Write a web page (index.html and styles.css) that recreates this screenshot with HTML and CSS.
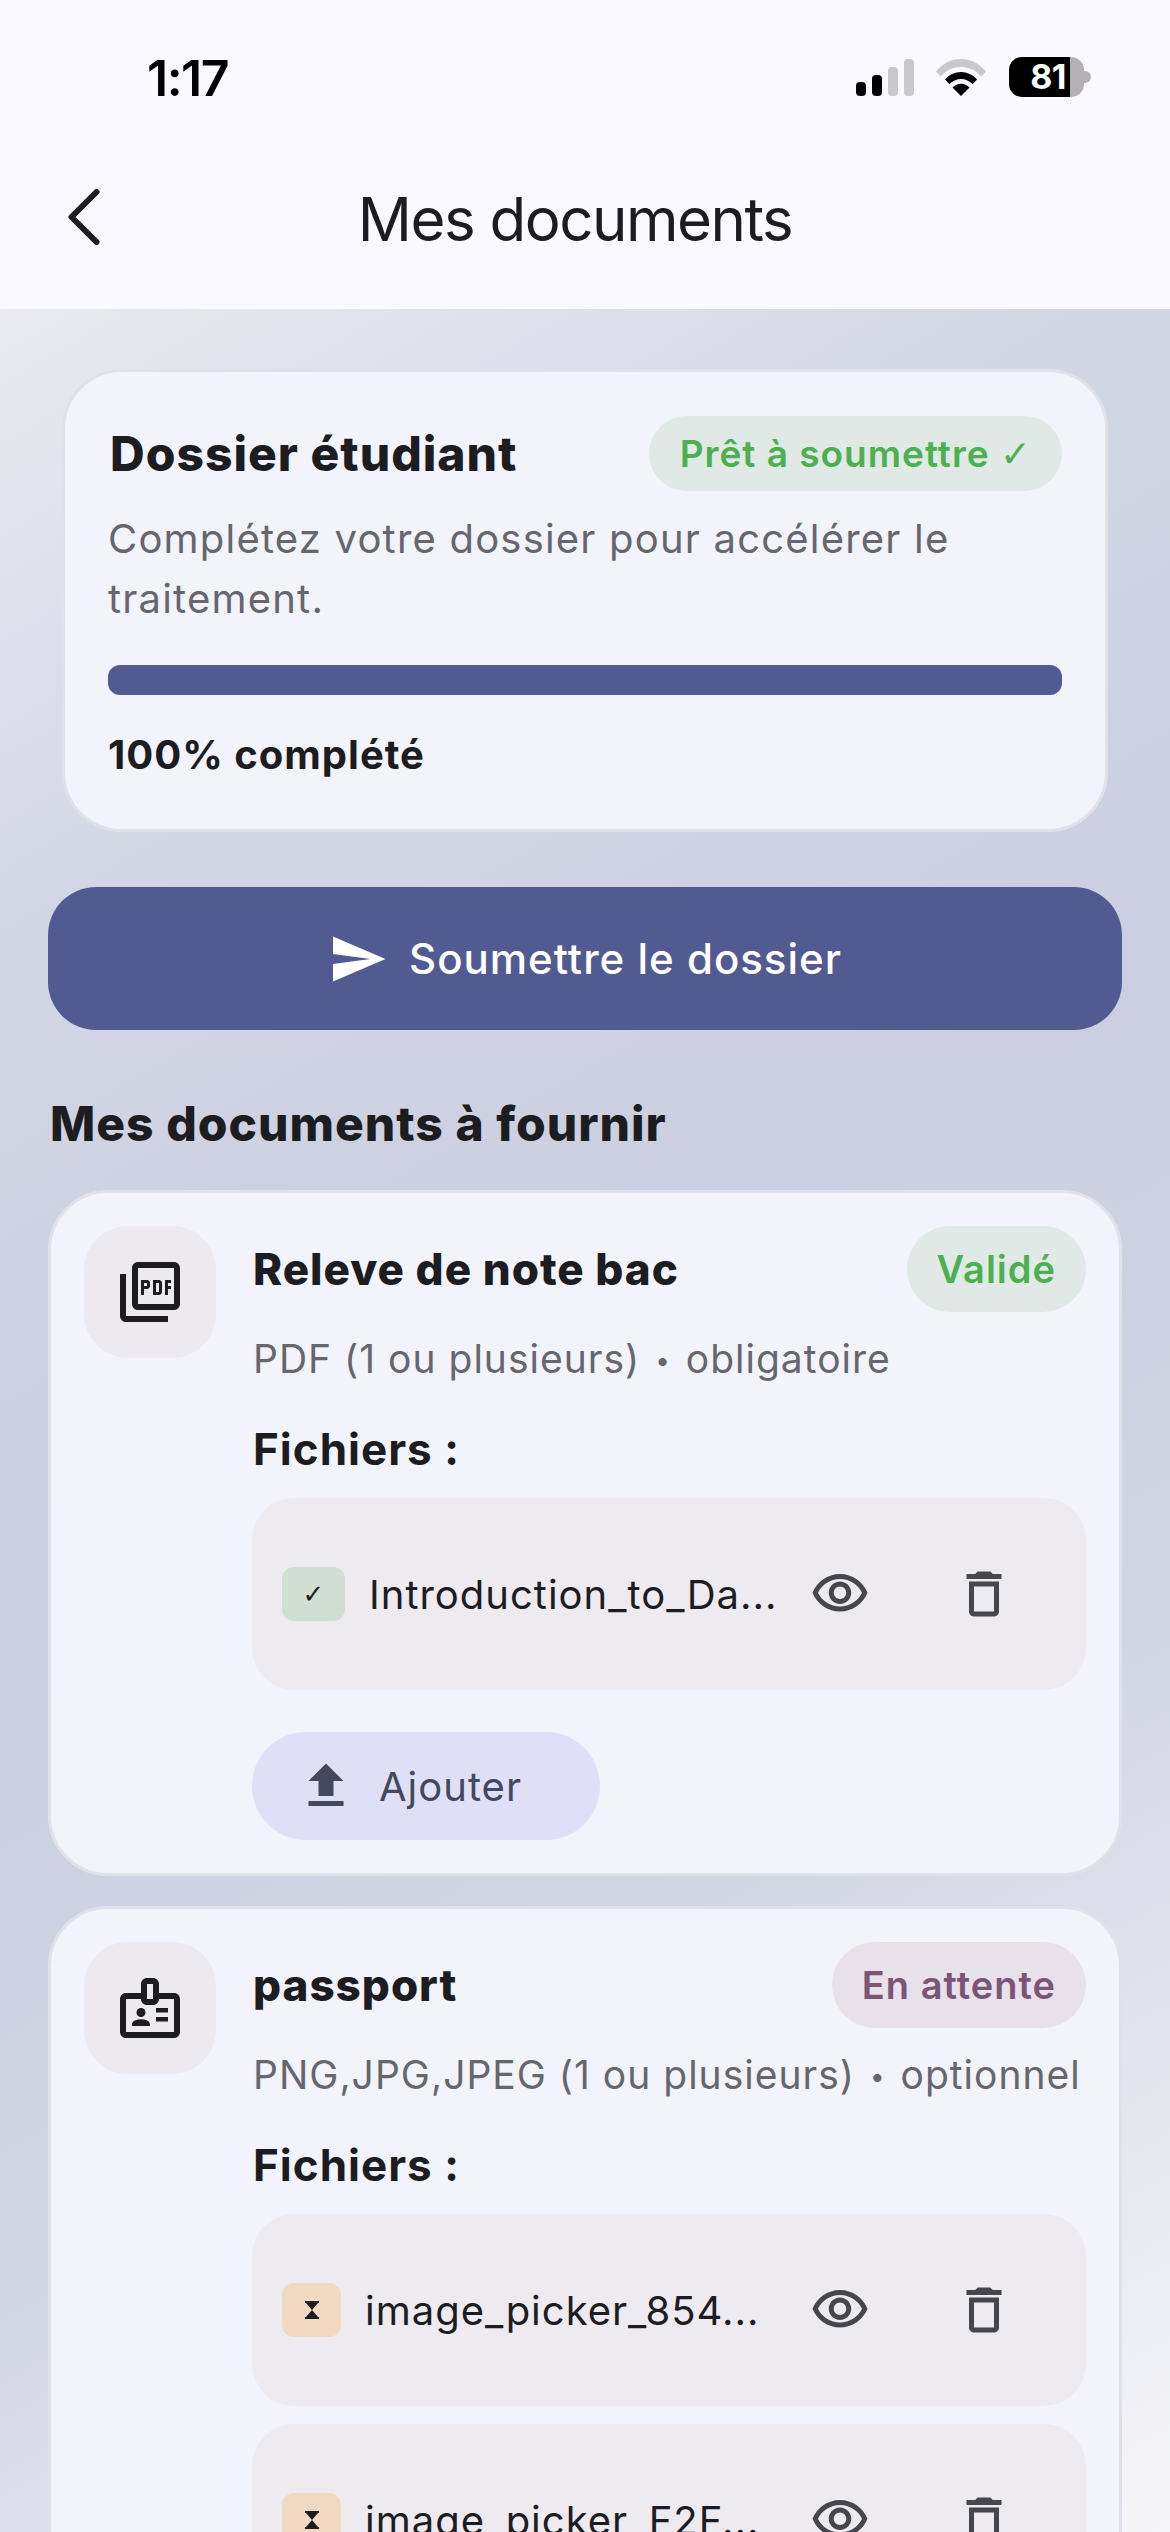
FILE: index.html
```html
<!DOCTYPE html>
<html lang="fr">
<head>
<meta charset="utf-8">
<title>Mes documents</title>
<link rel="stylesheet" href="styles.css">
</head>
<body>
<div class="app">
  <header class="top">
    <div class="status">
      <span class="clock">1:17</span>
      <div class="status-icons">
        <div class="signal"><i class="b1"></i><i class="b2"></i><i class="b3"></i><i class="b4"></i></div>
        <svg class="wifi" viewBox="0 0 50 37"><path fill="#c9c8cd" d="M0 12.5C6.500 4.500 15.500 0 25 0s18.500 4.500 25 12.500l-4.800 5C40 11.500 33 8 25 8S10 11.500 4.800 17.500z"/><path d="M9 20.500C13 15.800 19 13 25 13s12 2.800 16 7.500l-4.500 4.700C33.500 22 29.500 20 25 20s-8.500 2-11.500 5.200z"/><path d="M16.500 28.500C18.800 26 21.800 24.700 25 24.700s6.200 1.300 8.500 3.800L25 37z"/></svg>
        <div class="battery"><div class="batt-body"><span>81</span></div><div class="batt-rest"></div><div class="batt-nub"></div></div>
      </div>
    </div>
    <div class="nav">
      <svg class="back" viewBox="0 0 32 56"><path d="M28.500 3 3.500 28l25 25" fill="none" stroke="#1c1c21" stroke-width="6" stroke-linecap="round" stroke-linejoin="round"/></svg>
      <h1>Mes documents</h1>
    </div>
  </header>
  <main class="content">
    <section class="summary">
      <div class="sum-head">
        <h2>Dossier étudiant</h2>
        <span class="ready">Prêt à soumettre <span class="tick">✓</span></span>
      </div>
      <p class="sum-desc">Complétez votre dossier pour accélérer le traitement.</p>
      <div class="bar"></div>
      <p class="sum-pct">100% complété</p>
    </section>
    <button class="submit">
      <svg class="i60" viewBox="0 0 24 24"><path fill="#fff" d="M2.010 21 23 12 2.010 3 2 10l15 2-15 2z"/></svg>
      <span>Soumettre le dossier</span>
    </button>
    <h3 class="section">Mes documents à fournir</h3>

    <article class="doc">
      <div class="tile"><svg class="i72" viewBox="0 0 24 24"><path fill="#1c1c21" d="M20 2H8c-1.100 0-2 .9-2 2v12c0 1.100.9 2 2 2h12c1.100 0 2-.9 2-2V4c0-1.100-.9-2-2-2zm0 14H8V4h12v12zM4 6H2v14c0 1.100.9 2 2 2h14v-2H4V6zm12 6V9c0-.55-.45-1-1-1h-2v5h2c.55 0 1-.45 1-1zm-2-3h1v3h-1V9zm4 2h1v-1h-1V9h1V8h-2v5h1v-2zm-8 0h1c.55 0 1-.45 1-1V9c0-.55-.45-1-1-1H9v5h1v-2zm0-2h1v1h-1V9z"/></svg></div>
      <div class="doc-main">
        <div class="doc-head"><h4>Releve de note bac</h4><span class="pill ok">Validé</span></div>
        <p class="doc-sub">PDF (1 ou plusieurs) <span class="dot">•</span> obligatoire</p>
        <p class="files-label">Fichiers :</p>
        <div class="file">
          <span class="chip chip-ok">✓</span>
          <span class="fname">Introduction_to_Da...</span>
          <div class="actions">
            <svg class="i60" viewBox="0 0 24 24"><path fill="#46464f" d="M12 6c3.790 0 7.170 2.130 8.820 5.500C19.170 14.870 15.790 17 12 17s-7.170-2.130-8.820-5.500C4.830 8.130 8.210 6 12 6m0-2C7 4 2.730 7.110 1 11.500 2.730 15.890 7 19 12 19s9.270-3.110 11-7.500C21.270 7.110 17 4 12 4zm0 5c1.380 0 2.500 1.120 2.500 2.500S13.380 14 12 14s-2.500-1.120-2.500-2.500S10.620 9 12 9m0-2c-2.480 0-4.500 2.020-4.500 4.500S9.520 16 12 16s4.500-2.020 4.500-4.500S14.480 7 12 7z"/></svg>
            <svg class="i60" viewBox="0 0 24 24"><path fill="#46464f" d="M16 9v10H8V9h8m-1.500-6h-5l-1 1H5v2h14V4h-3.500l-1-1zM18 7H6v12c0 1.100.9 2 2 2h8c1.100 0 2-.9 2-2V7z"/></svg>
          </div>
        </div>
        <button class="add">
          <svg class="i60" viewBox="0 0 24 24"><path fill="#45475c" d="M9 16h6v-6h4l-7-7-7 7h4zm-4 2h14v2H5z"/></svg>
          <span>Ajouter</span>
        </button>
      </div>
    </article>

    <article class="doc">
      <div class="tile"><svg class="i72" viewBox="0 0 24 24" fill="#1c1c21"><path d="M20 7h-5V4c0-1.100-.9-2-2-2h-2C9.900 2 9 2.900 9 4v3H4C2.900 7 2 7.900 2 9v11c0 1.100.9 2 2 2h16c1.100 0 2-.9 2-2V9c0-1.100-.9-2-2-2zM11 4h2v5h-2V4zm9 16H4V9h5c0 1.100.9 2 2 2h2c1.100 0 2-.9 2-2h5v11z"/><circle cx="9" cy="13.500" r="1.500"/><path d="M11.080 16.180C10.440 15.900 9.740 15.750 9 15.750s-1.440.15-2.080.43C6.360 16.420 6 16.960 6 17.570V18h6v-.43c0-.61-.36-1.150-.92-1.390z"/><path d="M14 12h4v1.500h-4zM14 15h4v1.500h-4z"/></svg></div>
      <div class="doc-main">
        <div class="doc-head"><h4>passport</h4><span class="pill wait">En attente</span></div>
        <p class="doc-sub">PNG,JPG,JPEG (1 ou plusieurs) <span class="dot">•</span> optionnel</p>
        <p class="files-label">Fichiers :</p>
        <div class="file">
          <span class="chip chip-wait"><svg class="hg" viewBox="0 0 18 18"><path fill="#1c1c21" d="M2 0h14v2h-1L9 9l6 7h1v2H2v-2h1l6-7-6-7H2z"/></svg></span>
          <span class="fname">image_picker_854...</span>
          <div class="actions">
            <svg class="i60" viewBox="0 0 24 24"><path fill="#46464f" d="M12 6c3.790 0 7.170 2.130 8.820 5.500C19.170 14.870 15.790 17 12 17s-7.170-2.130-8.820-5.500C4.830 8.130 8.210 6 12 6m0-2C7 4 2.730 7.110 1 11.500 2.730 15.890 7 19 12 19s9.270-3.110 11-7.500C21.270 7.110 17 4 12 4zm0 5c1.380 0 2.500 1.120 2.500 2.500S13.380 14 12 14s-2.500-1.120-2.500-2.500S10.620 9 12 9m0-2c-2.480 0-4.500 2.020-4.500 4.500S9.520 16 12 16s4.500-2.020 4.500-4.500S14.480 7 12 7z"/></svg>
            <svg class="i60" viewBox="0 0 24 24"><path fill="#46464f" d="M16 9v10H8V9h8m-1.500-6h-5l-1 1H5v2h14V4h-3.500l-1-1zM18 7H6v12c0 1.100.9 2 2 2h8c1.100 0 2-.9 2-2V7z"/></svg>
          </div>
        </div>
        <div class="file next">
          <span class="chip chip-wait"><svg class="hg" viewBox="0 0 18 18"><path fill="#1c1c21" d="M2 0h14v2h-1L9 9l6 7h1v2H2v-2h1l6-7-6-7H2z"/></svg></span>
          <span class="fname">image_picker_F2F...</span>
          <div class="actions">
            <svg class="i60" viewBox="0 0 24 24"><path fill="#46464f" d="M12 6c3.790 0 7.170 2.130 8.820 5.500C19.170 14.870 15.790 17 12 17s-7.170-2.130-8.820-5.500C4.830 8.130 8.210 6 12 6m0-2C7 4 2.730 7.110 1 11.500 2.730 15.890 7 19 12 19s9.270-3.110 11-7.500C21.270 7.110 17 4 12 4zm0 5c1.380 0 2.500 1.120 2.500 2.500S13.380 14 12 14s-2.500-1.120-2.500-2.500S10.620 9 12 9m0-2c-2.480 0-4.500 2.020-4.500 4.500S9.520 16 12 16s4.500-2.020 4.500-4.500S14.480 7 12 7z"/></svg>
            <svg class="i60" viewBox="0 0 24 24"><path fill="#46464f" d="M16 9v10H8V9h8m-1.500-6h-5l-1 1H5v2h14V4h-3.500l-1-1zM18 7H6v12c0 1.100.9 2 2 2h8c1.100 0 2-.9 2-2V7z"/></svg>
          </div>
        </div>
      </div>
    </article>
  </main>
</div>
</body>
</html>
```

FILE: styles.css
```css
* { box-sizing: border-box; }
html, body { margin: 0; padding: 0; height: 2532px; overflow: hidden; }
body { font-family: Inter, "Noto Sans", "DejaVu Sans", sans-serif; color: #1c1c21; }
h1, h2, h3, h4, p { margin: 0; font: inherit; }
button { font: inherit; border: 0; cursor: pointer; }
svg { display: block; flex: none; }
.i60 { width: 60px; height: 60px; }
.i72 { width: 72px; height: 72px; }

.app { height: 2532px; display: flex; flex-direction: column; overflow: hidden; }

.top { height: 309px; flex: none; background: #f9f9ff; padding: 0 79px 0 68px; }
.status { height: 155px; display: flex; justify-content: space-between; align-items: flex-start; padding-top: 50px; }
.clock { margin-left: 79px; font-size: 50px; line-height: 56px; font-weight: 600; color: #000; letter-spacing: -1.500px; }
.status-icons { display: flex; align-items: flex-start; margin-top: 7px; }
.signal { display: flex; align-items: flex-end; gap: 6px; height: 37px; margin-top: 2px; }
.signal i { display: block; width: 10px; border-radius: 4px; background: #c9c8cd; }
.signal .b1 { height: 14px; background: #000; }
.signal .b2 { height: 21px; background: #000; }
.signal .b3 { height: 29px; }
.signal .b4 { height: 37px; }
.wifi { width: 50px; height: 37px; margin: 2px 23px 0 22px; }
.battery { display: flex; align-items: center; height: 40px; }
.batt-body { width: 61px; height: 40px; background: #000; border-radius: 13px 0 0 13px; color: #fff; font-size: 34px; font-weight: 700; line-height: 40px; text-align: right; padding-right: 4px; letter-spacing: -0.500px; }
.batt-rest { width: 14px; height: 40px; background: #b2b0b5; border-radius: 0 13px 13px 0; }
.batt-nub { width: 7px; height: 12px; background: #b2b0b5; border-radius: 0 6px 6px 0; }

.nav { position: relative; height: 100px; margin-top: 21px; display: flex; align-items: center; justify-content: center; }
.back { position: absolute; left: 0; top: 13px; width: 32px; height: 56px; }
.nav h1 { font-size: 60px; line-height: 100px; font-weight: 400; letter-spacing: -1.500px; margin: -14px 0 0 -9px; }

.content { flex: 1; min-height: 0; overflow: hidden; padding: 60px 48px 0; background: linear-gradient(150deg, #e9ebf1 0%, #d3d6e4 22%, #cacee0 45%, #d2d5e3 68%, #f6f6f9 100%); }

.summary { margin: 0 14px; border: 3px solid #e1e1eb; border-radius: 60px; background: #f3f3fc; padding: 44px 43px 50px; }
.sum-head { display: flex; justify-content: space-between; align-items: center; height: 75px; }
.sum-head h2 { font-size: 48px; font-weight: 800; letter-spacing: 1px; padding-left: 2px; }
.ready { height: 75px; padding: 0 30px 0 31px; border-radius: 38px; background: #e0e9e6; color: #4caf50; font-size: 37px; font-weight: 600; line-height: 75px; letter-spacing: 1px; white-space: nowrap; }
.tick { font-family: "DejaVu Sans", sans-serif; }
.sum-desc { margin-top: 18px; font-size: 40px; line-height: 60px; color: #66666c; letter-spacing: 1.200px; }
.bar { margin-top: 36px; height: 30px; border-radius: 12px; background: #525b91; }
.sum-pct { margin-top: 36px; font-size: 40px; line-height: 48px; font-weight: 700; letter-spacing: 1px; }

.submit { margin-top: 55px; width: 100%; height: 143px; border-radius: 48px; background: #525b91; color: #fff; display: flex; align-items: center; justify-content: center; gap: 21px; font-size: 42px; font-weight: 500; letter-spacing: 1px; }

.section { margin-top: 64px; font-size: 48px; line-height: 60px; font-weight: 800; letter-spacing: 1px; padding-left: 2px; }

.doc { margin-top: 36px; border: 3px solid #e1e1eb; border-radius: 60px; background: #f3f3fc; padding: 33px 33px 33px; display: flex; gap: 36px; }
.doc + .doc { margin-top: 30px; }
.tile { width: 132px; height: 132px; flex: none; border-radius: 44px; background: #ece9ef; display: flex; align-items: center; justify-content: center; }
.doc-main { flex: 1; min-width: 0; }
.doc-head { display: flex; justify-content: space-between; align-items: center; height: 86px; }
.doc-head h4 { font-size: 44px; font-weight: 800; letter-spacing: 1px; padding-left: 1px; }
.pill { height: 86px; border-radius: 43px; padding: 0 30px; font-size: 38px; font-weight: 600; line-height: 86px; letter-spacing: 1px; }
.ok { background: #e0e9e6; color: #4caf50; }
.wait { background: #e8e0ea; color: #7a5577; }
.doc-sub { margin-top: 21px; font-size: 39px; line-height: 52px; color: #66666c; letter-spacing: 1px; white-space: nowrap; padding-left: 1px; }
.dot { font-size: 26px; vertical-align: 3px; margin: 0 3px; }
.files-label { margin-top: 34px; font-size: 44px; line-height: 56px; font-weight: 700; letter-spacing: 1px; padding-left: 1px; }

.file { margin-top: 21px; height: 192px; border-radius: 42px; background: #edebf0; display: flex; align-items: center; padding: 0 72px 0 30px; }
.file.next { margin-top: 18px; }
.chip { height: 54px; flex: none; border-radius: 12px; display: flex; align-items: center; justify-content: center; }
.chip-ok { width: 63px; background: #cfe0d3; font-family: "DejaVu Sans", sans-serif; font-size: 26px; }
.chip-wait { width: 59px; background: #f1d8c0; }
.hg { width: 18px; height: 18px; }
.fname { flex: 1; min-width: 0; margin-left: 24px; font-size: 40px; letter-spacing: 1px; white-space: nowrap; }
.actions { display: flex; gap: 84px; flex: none; }

.add { margin-top: 42px; width: 348px; height: 108px; border-radius: 54px; background: #dfdff7; color: #45475c; display: flex; align-items: center; padding: 0 0 0 44px; gap: 23px; font-size: 40px; letter-spacing: 1px; }
```
